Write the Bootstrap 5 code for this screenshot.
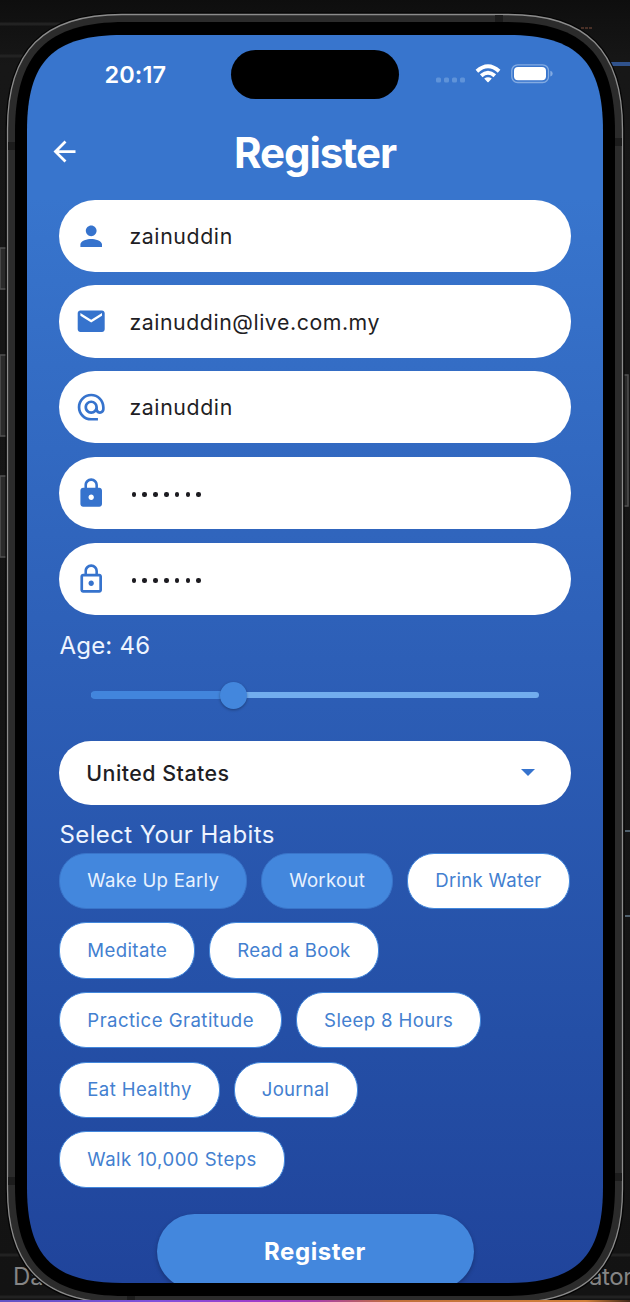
<!DOCTYPE html>
<html lang="en">
<head>
<meta charset="utf-8">
<meta name="viewport" content="width=device-width, initial-scale=1">
<title>Register</title>
<link href="https://cdn.jsdelivr.net/npm/bootstrap@5.3.0/dist/css/bootstrap.min.css" rel="stylesheet">
<style>
body{width:630px;height:1302px;margin:0;background:#111;font-family:Inter,"Liberation Sans",sans-serif;overflow:hidden}
.stage{width:630px;height:1302px;padding:35px 27px 19px}
.shell{left:0;top:0;width:630px;height:1302px}
.screen{width:576px;height:1248px;overflow:hidden}
.statusbar{height:78px}
.clock{font-size:23.5px;font-weight:600;letter-spacing:.1px;width:164px;margin-left:40px;padding-left:37.5px;line-height:78px;padding-top:1px}
.island{width:168px;height:49px;background:#000;margin-top:1px}
.appbar{height:79px}
.title{font-size:42px;font-weight:700;letter-spacing:-1.1px;line-height:79px;color:#fff}
.back{left:21px;top:22px}
.form-area{padding:7.6px 32px 0}
.field{height:72.3px;border-radius:36px;background:#fff;padding-left:16px;gap:22px;margin-bottom:13.5px;font-size:21.3px;letter-spacing:.62px;color:#1f1e24}
.field span{padding-top:2px}
.field svg{width:32.4px;height:32.4px;fill:#3673cd;flex:none}
.field .mail-text{letter-spacing:.56px}
.dots{gap:6.3px;padding-left:2.3px;padding-top:3px}
.dots i{width:4.5px;height:4.5px;border-radius:50%;background:#1c1b20}
.lbl{font-size:24px;line-height:30px;color:#edf4ff}
.age-lbl{margin-top:15.5px;letter-spacing:.2px;padding-left:.5px}
.age-row{height:69.5px}
.habits-lbl{margin-top:15px;margin-bottom:2.6px;letter-spacing:.38px;padding-left:.5px}
.track{height:6px;border-radius:3px;background:#72adee;margin:0 32px}
.filled{height:8px;border-radius:4px 0 0 4px;background:#4285dc}
.knob{width:27px;height:27px;background:#4387dd;box-shadow:0 1px 3px #0005;margin-left:-14px;flex:none}
.pick{height:64.5px;border-radius:32px;background:#fff;padding:0 36.5px 0 27.3px;margin-top:10.5px;font-size:21.4px;font-weight:500;letter-spacing:.47px;color:#1f1e24}
.habits{column-gap:13.6px;row-gap:13.3px}
.habit{height:56.4px;border-radius:27px;border:1.4px solid #4287dc;background:#fff;color:#4380d0;font-size:18.6px;padding:1px 27.2px 0 27.3px;letter-spacing:.29px;white-space:nowrap}
.habit.roomy{letter-spacing:.46px}
.habit.mid{letter-spacing:.38px}
.habit.on{background:#4387dd;border-color:#3974c9;color:#e8f2ff}
.habit.tight{letter-spacing:.22px}
.submit{width:317px;height:75px;border-radius:38px;background:#4387dd;color:#fff;font-size:24px;font-weight:700;letter-spacing:.55px;box-shadow:0 2px 4px #0004;margin-top:26.5px}
</style>
</head>
<body>
<main class="stage position-relative">
<svg class="shell position-absolute" viewBox="0 0 630 1302" aria-hidden="true">
<defs>
<linearGradient id="sky" x1="0" y1="0" x2="0" y2="1"><stop offset="0" stop-color="#3875cd"/><stop offset=".13" stop-color="#3875cd"/><stop offset=".5" stop-color="#2d5fb7"/><stop offset=".8" stop-color="#244fa6"/><stop offset="1" stop-color="#20449b"/></linearGradient>
<linearGradient id="strip"><stop offset="0" stop-color="#6254c4"/><stop offset=".25" stop-color="#8052dc"/><stop offset=".42" stop-color="#a03bc9"/><stop offset=".5" stop-color="#a83fab"/><stop offset=".62" stop-color="#c1703c"/><stop offset=".93" stop-color="#d3813b"/><stop offset="1" stop-color="#402717"/></linearGradient>
<linearGradient id="room" x1="0" y1="0" x2="0" y2="1"><stop offset="0" stop-color="#0e0e0e"/><stop offset=".05" stop-color="#171717"/><stop offset="1" stop-color="#131313"/></linearGradient>
</defs>
<rect width="630" height="1302" fill="url(#room)"/>
<path d="M0 24H60M0 56H30M0 1255H40M600 1255H630M0 1297H630" stroke="#222" stroke-width="3"/>
<path d="M606 64H630" stroke="#30528c" stroke-width="4"/>
<path d="M625 831H630M625 916H630" stroke="#50606c" stroke-width="2"/>
<path d="M581 28H592" stroke="#493027" stroke-width="2" stroke-dasharray="3 1"/>
<g fill="#2b2b2b" stroke="#515151" stroke-width="1.5"><rect x="0" y="248" width="9" height="41"/><rect x="0" y="355" width="9" height="81"/><rect x="0" y="476" width="9" height="81"/><rect x="620" y="375" width="8" height="131"/></g>
<g fill="#858585" font-size="24" font-family="Inter,sans-serif"><text x="13" y="1285">Da</text><text x="589" y="1285" letter-spacing="-.4">ator</text></g>
<path d="M7.500 129C7.500 50.500 43.500 14.500 122 14.500H508C586.500 14.500 622.500 50.500 622.500 129V1189C622.500 1267 586.500 1303 508 1303H122C43.500 1303 7.500 1267 7.500 1189Z" fill="#2b2b2b" stroke="#050505" stroke-width="4"/>
<path d="M7.500 129C7.500 50.500 43.500 14.500 122 14.500H508C586.500 14.500 622.500 50.500 622.500 129V1189C622.500 1267 586.500 1303 508 1303H122C43.500 1303 7.500 1267 7.500 1189Z" fill="#2b2b2b" stroke="#8c8c8c" stroke-width="1.300"/>
<path d="M8 146H15M615 142H622M8 1181H15M615 1177H622" stroke="#1c1c1c" stroke-width="8"/><path d="M499 15V22M131 1296V1302" stroke="#1c1c1c" stroke-width="8"/>
<path d="M15 132C15 54 47 22 125 22H505C583 22 615 54 615 132V1186C615 1264 583 1296 505 1296H125C47 1296 15 1264 15 1186Z"/>
<path d="M27 131C27 61 53 35 123 35H507C577 35 603 61 603 131V1187C603 1257 577 1283 507 1283H123C53 1283 27 1257 27 1187Z" fill="url(#sky)"/>
<rect y="1300" width="630" height="2" fill="url(#strip)"/>
</svg>
<section class="screen position-relative text-white">
<div class="statusbar d-flex align-items-center">
<div class="clock">20:17</div>
<div class="island rounded-pill"></div>
<svg class="ms-auto" width="174" height="40" viewBox="429 54 174 40" fill="#fff">
<g fill="#5f93d9"><rect x="436" y="77.500" width="5" height="5" rx="1.500"/><rect x="444" y="77.500" width="5" height="5" rx="1.500"/><rect x="452" y="77.500" width="5" height="5" rx="1.500"/><rect x="460" y="77.500" width="5" height="5" rx="1.500"/></g>
<g fill="none" stroke="#fff" stroke-width="3.900"><path d="M476.900 71.200Q488 61.300 499.100 71.200"/><path d="M481.200 75.700Q488 69.700 494.800 75.700"/></g>
<path d="M484.200 78.600Q488 75.800 491.800 78.600L488.600 82Q488 82.600 487.400 82Z"/>
<rect x="511.800" y="64.800" width="36.700" height="17.700" rx="5.800" fill="none" stroke="#83abe2" stroke-width="1.300"/><rect x="514" y="67" width="32" height="13.200" rx="4"/><path d="M550.300 70.800Q552.700 71.500 552.700 73.700T550.300 76.600Z" fill="#83abe2"/>
</svg>
</div>
<header class="appbar position-relative text-center">
<svg class="back position-absolute" width="33" height="33" viewBox="0 0 24 24" fill="#fff"><path d="M20 11H7.830l5.590-5.590L12 4l-8 8 8 8 1.410-1.410L7.830 13H20z"/></svg>
<h1 class="title m-0">Register</h1>
</header>
<div class="form-area">
<div class="field d-flex align-items-center"><svg viewBox="0 0 24 24"><path d="M12 12c2.210 0 4-1.790 4-4s-1.790-4-4-4-4 1.790-4 4 1.790 4 4 4zm0 2c-2.670 0-8 1.340-8 4v2h16v-2c0-2.660-5.330-4-8-4z"/></svg><span>zainuddin</span></div>
<div class="field d-flex align-items-center"><svg viewBox="0 0 24 24"><path d="M20 4H4c-1.100 0-2 .9-2 2v12c0 1.100.9 2 2 2h16c1.100 0 2-.9 2-2V6c0-1.100-.9-2-2-2zm0 4-8 5-8-5V6l8 5 8-5v2z"/></svg><span class="mail-text">zainuddin@live.com.my</span></div>
<div class="field d-flex align-items-center"><svg viewBox="0 0 24 24"><path d="M12 1.950c-5.520 0-10 4.480-10 10s4.480 10 10 10h5v-2h-5c-4.340 0-8-3.660-8-8s3.660-8 8-8 8 3.660 8 8v1.430c0 .79-.71 1.570-1.500 1.570s-1.500-.78-1.500-1.570v-1.430c0-2.760-2.240-5-5-5s-5 2.240-5 5 2.240 5 5 5c1.380 0 2.640-.56 3.540-1.470.65.89 1.770 1.470 2.960 1.470 1.970 0 3.500-1.600 3.500-3.570v-1.430c0-5.520-4.480-10-10-10zm0 13c-1.660 0-3-1.340-3-3s1.340-3 3-3 3 1.340 3 3-1.340 3-3 3z"/></svg><span>zainuddin</span></div>
<div class="field d-flex align-items-center"><svg viewBox="0 0 24 24"><path d="M18 8h-1V6c0-2.760-2.240-5-5-5S7 3.240 7 6v2H6c-1.100 0-2 .9-2 2v10c0 1.100.9 2 2 2h12c1.100 0 2-.9 2-2V10c0-1.100-.9-2-2-2zm-6 9c-1.100 0-2-.9-2-2s.9-2 2-2 2 .9 2 2-.9 2-2 2zm3.100-9H8.900V6c0-1.710 1.390-3.100 3.100-3.100s3.100 1.390 3.100 3.100v2z"/></svg><div class="dots d-flex"><i></i><i></i><i></i><i></i><i></i><i></i><i></i></div></div>
<div class="field d-flex align-items-center"><svg viewBox="0 0 24 24"><path d="M12 17c1.100 0 2-.9 2-2s-.9-2-2-2-2 .9-2 2 .9 2 2 2zm6-9h-1V6c0-2.760-2.240-5-5-5S7 3.240 7 6v2H6c-1.100 0-2 .9-2 2v10c0 1.100.9 2 2 2h12c1.100 0 2-.9 2-2V10c0-1.100-.9-2-2-2zM8.900 6c0-1.710 1.390-3.100 3.100-3.100s3.100 1.390 3.100 3.100v2H8.900V6zM18 20H6V10h12v10z"/></svg><div class="dots d-flex"><i></i><i></i><i></i><i></i><i></i><i></i><i></i></div></div>
<div class="lbl age-lbl">Age: 46</div>
<div class="age-row d-flex align-items-center">
<div class="track d-flex align-items-center flex-fill"><div class="filled" style="width:143px"></div><div class="knob rounded-circle"></div></div>
</div>
<div class="pick d-flex align-items-center justify-content-between"><span>United States</span><svg width="14" height="7" viewBox="0 0 14 7"><path d="M0 0h14L7 7z" fill="#3673cd"/></svg></div>
<div class="lbl habits-lbl">Select Your Habits</div>
<div class="habits d-flex flex-wrap">
<div class="habit on d-flex align-items-center">Wake Up Early</div>
<div class="habit on d-flex align-items-center">Workout</div>
<div class="habit d-flex align-items-center">Drink Water</div>
<div class="habit mid d-flex align-items-center">Meditate</div>
<div class="habit d-flex align-items-center">Read a Book</div>
<div class="habit roomy d-flex align-items-center">Practice Gratitude</div>
<div class="habit mid d-flex align-items-center">Sleep 8 Hours</div>
<div class="habit mid d-flex align-items-center">Eat Healthy</div>
<div class="habit tight d-flex align-items-center">Journal</div>
<div class="habit roomy d-flex align-items-center">Walk 10,000 Steps</div>
</div>
<button type="button" class="submit border-0 d-flex align-items-center justify-content-center mx-auto">Register</button>
</div>
</section>
</main>
<script src="https://cdn.jsdelivr.net/npm/bootstrap@5.3.0/dist/js/bootstrap.bundle.min.js"></script>
</body>
</html>
